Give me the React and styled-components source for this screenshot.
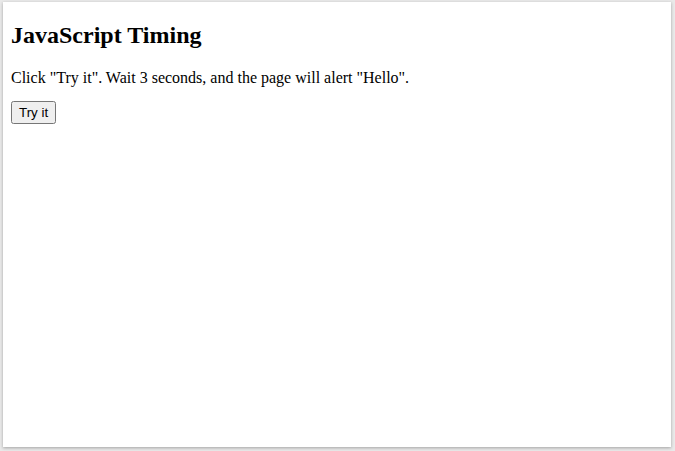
import React from 'react'
import styled, { createGlobalStyle } from 'styled-components'

const GlobalStyle = createGlobalStyle`
html, body {
  margin: 0;
  padding: 0;
  height: 100%;
  background: #e9e9e9;
}
#root {
  height: 100%;
}
`;

const Frame = styled.div`
box-sizing: border-box;
height: 100%;
padding: 2px 4px 4px 3px;
`;

const Page = styled.div`
box-sizing: border-box;
height: 100%;
background: #ffffff;
box-shadow: 0 1px 3px rgba(0, 0, 0, 0.3);
padding: 4px 8px 8px 8px;
font-family: "Liberation Serif", "Times New Roman", serif;
color: #000000;
`;

const Title = styled.h1`
font-size: 24px;
font-weight: bold;
margin: 16px 0;
`;

const Text = styled.p`
font-size: 16px;
margin: 20px 0 14px;
`;

const Button = styled.button`
font-family: "Liberation Sans", Arial, sans-serif;
font-size: 13.33px;
padding: 2px 6px;
`;

const App = () => {
  return (
    <>
      <GlobalStyle />
      <Frame>
        <Page>
          <Title>JavaScript Timing</Title>
          <Text>Click "Try it". Wait 3 seconds, and the page will alert "Hello".</Text>
          <Button>Try it</Button>
        </Page>
      </Frame>
    </>
  );
}

export default App
